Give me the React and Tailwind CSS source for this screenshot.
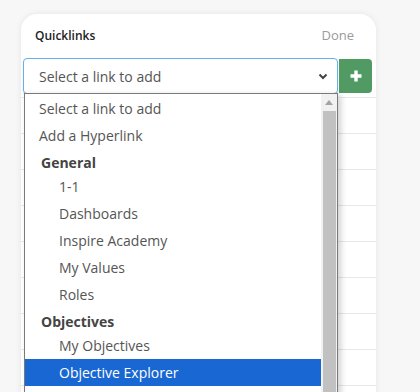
export default function App() {
  const rows = Array.from({ length: 10 });
  const items = [
    { t: "Select a link to add", k: "opt0" },
    { t: "Add a Hyperlink", k: "opt0" },
    { t: "General", k: "h" },
    { t: "1-1", k: "opt" },
    { t: "Dashboards", k: "opt" },
    { t: "Inspire Academy", k: "opt" },
    { t: "My Values", k: "opt" },
    { t: "Roles", k: "opt" },
    { t: "Objectives", k: "h" },
    { t: "My Objectives", k: "opt" },
    { t: "Objective Explorer", k: "sel" },
  ];
  return (
    <div
      className="w-[420px] h-[392px] overflow-hidden bg-[#f7f7f7] pl-[21px] pt-[14px]"
      style={{ fontFamily: '"Open Sans", "Noto Sans", sans-serif' }}
    >
      <div className="relative w-[355px] h-[420px] bg-white rounded-[16px] shadow-[0_0_6px_rgba(0,0,0,0.08)] overflow-hidden">
        <div className="h-[44px] flex items-center justify-between pl-[14px] pr-[22px]">
          <span className="text-[12px] font-semibold text-[#222]">Quicklinks</span>
          <span className="text-[13px] text-[#9a9a9a]">Done</span>
        </div>
        <div className="flex pl-[2px] pr-[4px] h-[36px]">
          <div className="flex-1 flex items-center justify-between border border-[#66afe9] rounded-[4px] pl-[15px] pr-[9px] shadow-[0_1px_2px_rgba(0,0,0,0.15)]">
            <span className="text-[14px] text-[#555]">Select a link to add</span>
            <svg width="10" height="7" viewBox="0 0 10 7">
              <path d="M1.5 1.5 L5 5 L8.5 1.5" fill="none" stroke="#444" strokeWidth="2" />
            </svg>
          </div>
          <div className="ml-[1px] w-[33px] h-[34px] mt-[1px] bg-[#519a64] rounded-r-[4px] flex items-center justify-center">
            <svg width="12" height="12" viewBox="0 0 12 12">
              <path d="M6 0.5 V11.5 M0.5 6 H11.5" stroke="white" strokeWidth="3.4" />
            </svg>
          </div>
        </div>
        <div className="mt-[3px] border-t border-[#e8e8e8]">
          {rows.map((_, i) => (
            <div key={i} className="h-[36px] border-b border-[#e8e8e8]" />
          ))}
        </div>
        <div className="absolute left-[3px] top-[79px] w-[314px] h-[320px] bg-white border border-[#7a7a7a] shadow-[3px_2px_6px_rgba(0,0,0,0.18)] flex">
          <div className="flex-1 pt-[1px]">
            {items.map((it, i) => {
              if (it.k === "h")
                return (
                  <div key={i} className="h-[24px] flex items-center pl-[16px] pt-[2px] text-[14px] font-bold text-[#444]">
                    {it.t}
                  </div>
                );
              if (it.k === "sel")
                return (
                  <div key={i} className="h-[27px] flex items-center pl-[34px] text-[14px] bg-[#1967d2] text-white">
                    {it.t}
                  </div>
                );
              return (
                <div
                  key={i}
                  className={`h-[27px] flex items-center text-[14px] text-[#555] ${it.k === "opt0" ? "pl-[14px]" : "pl-[34px]"}`}
                >
                  {it.t}
                </div>
              );
            })}
          </div>
          <div className="w-[16px] bg-[#f1f1f1] flex flex-col items-center">
            <div className="h-[17px] flex items-center justify-center">
              <svg width="8" height="5" viewBox="0 0 8 5">
                <path d="M0 5 L4 0 L8 5 Z" fill="#a3a3a3" />
              </svg>
            </div>
            <div className="w-[13px] flex-1 bg-[#c1c1c1]" />
          </div>
        </div>
      </div>
    </div>
  );
}
